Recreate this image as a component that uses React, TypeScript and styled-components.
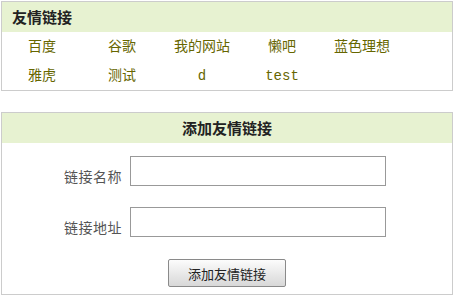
import React from 'react';
import styled, { createGlobalStyle } from 'styled-components';

const GlobalStyle = createGlobalStyle`
  body {
    margin: 0;
    background: #fff;
    font-family: "Noto Sans CJK SC", "Liberation Sans", sans-serif;
  }
`;

const Page = styled.div`
  padding: 1px;
  width: 452px;
`;

const Panel = styled.div<{ $gap?: number }>`
  width: 452px;
  box-sizing: border-box;
  border: 1px solid #cccccc;
  background: #fff;
  margin-top: ${(p) => p.$gap || 0}px;
`;

const PanelHead = styled.div<{ $center?: boolean }>`
  height: 30px;
  line-height: 29px;
  background: #e7f2d1;
  padding: 0 10px;
  font-size: 15px;
  font-weight: bold;
  color: #222;
  text-align: ${(p) => (p.$center ? 'center' : 'left')};
`;

const LinkGrid = styled.ul`
  list-style: none;
  margin: 0;
  padding: 0;
  display: grid;
  grid-template-columns: repeat(5, 80px);
  grid-auto-rows: 29px;
`;

const LinkItem = styled.li`
  text-align: center;
  line-height: 30px;
  font-size: 14px;
  font-family: "Liberation Mono", "Noto Sans CJK SC", monospace;
  color: #666600;
  cursor: pointer;
`;

const Form = styled.form`
  display: flex;
  flex-direction: column;
  align-items: center;
  padding: 13px 6px 7px 0;
`;

const Row = styled.div`
  display: flex;
  align-items: center;
  gap: 8px;
  margin-bottom: 21px;
`;

const Label = styled.label`
  width: 60px;
  text-align: right;
  font-size: 14px;
  letter-spacing: 0.5px;
  color: #555;
  padding-top: 9px;
`;

const Input = styled.input`
  width: 256px;
  height: 30px;
  box-sizing: border-box;
  border: 1px solid #999;
  background: #fff;
  outline: none;
  padding: 0 4px;
`;

const Button = styled.button`
  width: 118px;
  height: 28px;
  margin: 1px 0 0 6px;
  border: 1px solid #8a8a8a;
  border-radius: 2px;
  background: linear-gradient(#fcfcfc, #e6e6e6 60%, #d8d8d8);
  font-family: "Noto Sans CJK SC", sans-serif;
  font-size: 13px;
  color: #222;
  padding: 0;
`;

const links = ['百度', '谷歌', '我的网站', '懒吧', '蓝色理想', '雅虎', '测试', 'd', 'test'];

export default function App() {
  return (
    <Page>
      <GlobalStyle />
      <Panel>
        <PanelHead>友情链接</PanelHead>
        <LinkGrid>
          {links.map((l) => (
            <LinkItem key={l}>{l}</LinkItem>
          ))}
        </LinkGrid>
      </Panel>
      <Panel $gap={21}>
        <PanelHead $center>添加友情链接</PanelHead>
        <Form onSubmit={(e) => e.preventDefault()}>
          <Row>
            <Label>链接名称</Label>
            <Input type="text" />
          </Row>
          <Row>
            <Label>链接地址</Label>
            <Input type="text" />
          </Row>
          <Button type="submit">添加友情链接</Button>
        </Form>
      </Panel>
    </Page>
  );
}
